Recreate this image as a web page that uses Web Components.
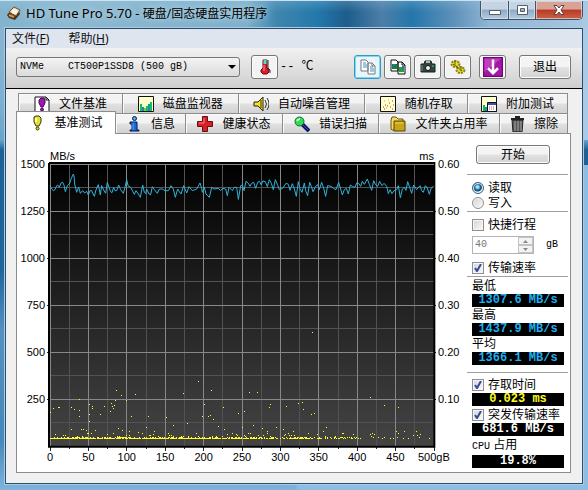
<!DOCTYPE html>
<html lang="zh-CN">
<head>
<meta charset="utf-8">
<title>HD Tune Pro 5.70</title>
<style>
html, body { margin: 0; height: 100%; }
body { font: 12px/16px "Liberation Sans", "Noto Sans CJK SC", sans-serif; color: #000; --mono: "Liberation Mono", "Noto Sans CJK SC", monospace; }
</style>
</head>
<body>
<hd-window>
  <hd-titlebar slot="title">HD Tune Pro 5.70 - </hd-titlebar>
  <hd-menubar></hd-menubar>
  <hd-toolbar></hd-toolbar>
  <hd-workspace></hd-workspace>
</hd-window>

<script>
const define = (name, markup, setup) => {
  const template = document.createElement('template');
  template.innerHTML = markup;
  customElements.define(name, class extends HTMLElement {
    constructor() {
      super();
      this.attachShadow({ mode: 'open' }).append(template.content.cloneNode(true));
    }
    connectedCallback() { if (setup) setup(this.shadowRoot, this); }
  });
};

const icons = {
  disk: '<path d="M1 9 6 3 13 5 14 8 9 14 3 12Z" fill="#443322"/><path d="M3 6 8 1 14 4 10 10Z" fill="#e9d6b8" stroke="#6e5130"/><ellipse cx="8.5" cy="5.5" rx="3" ry="2.5" fill="#fff4dc"/><path d="M3 9l5 2" stroke="#e0953c" stroke-width="2"/>',
  thermo: '<path d="M6 1h4v8l2 2v2l-2 2H6l-2-2v-2l2-2z" fill="#e0182d" stroke="#700818"/><path d="M6.500 1h3v4h-3z" fill="#4fe0c4"/><path d="M7 6v6" stroke="#ff9aa0"/><path d="M11 1v8l2 2v3" fill="none" stroke="#333"/>',
  copy: '<path d="M1 1h5l2 2v9H1zM8 4h4l3 3v8H8z" fill="#fff" stroke="#777"/><path d="M3 4h3M3 6h4M3 8h4M10 8h3M10 10h4M10 12h4" stroke="#3a91c8"/><path d="M12 4v3h3" fill="none" stroke="#777"/>',
  copyImage: '<path d="M1 1h5l2 2v9H1zM8 3h4l3 3v9H8z" fill="#fff" stroke="#111"/><path d="M2 5h5v5H2z" fill="#16803a"/><path d="M9 8h5v5H9z" fill="#1ca52f"/><path d="M3 5h2v2H3zM12 7h2v3h-2z" fill="#2776c8"/><path d="M12 3v3h3" fill="none" stroke="#111"/>',
  camera: '<path d="M1 5h3l1-3h6l1 3h3v8H1z" fill="#33443e" stroke="#17221e"/><path d="M6 4V2h4v2" fill="#aeb8b4"/><circle cx="8" cy="9" r="2.500" fill="#f1f5f3" stroke="#111"/><path d="M2 6v6" stroke="#7d8a85"/><path d="M12 7h2" stroke="#1eea6c"/>',
  gears: '<ellipse cx="5.500" cy="5" rx="4" ry="3" fill="#e6dc30" stroke="#8c800e" stroke-width="2" stroke-dasharray="2 1"/><ellipse cx="10.500" cy="11" rx="4" ry="3" fill="#e6dc30" stroke="#8c800e" stroke-width="2" stroke-dasharray="2 1"/><path d="M5 1v5M11 7v5M3 5l9 7" stroke="#6d620c"/>',
  down: '<path d="M0 0h16v16H0z" fill="#a316a8"/><path d="M0 0h16L0 13z" fill="#bf3cc3"/><path d="M8 2v11M4 9l4 4 4-4" stroke="#fff" stroke-width="2" fill="none"/><path d="M.5.5h15v15H.5z" fill="none" stroke="#6c0871"/>',
  fileMark: '<path d="M1 1h11l3 3v12H1z" fill="#fff" stroke="#111"/><path d="M12 1v3h3" fill="none" stroke="#111"/><path d="M5 4l2-2h3l1 2v3l-2 4H7L5 7z" fill="#a315b2" stroke="#480650"/><circle cx="8" cy="13.500" r="1.500" fill="#a315b2" stroke="#480650"/>',
  bars: '<path d="M.5.500h15v15H.5z" fill="#ffffc8" stroke="#111"/><path d="M2 8h2v7H2zM8 10h2v5H8zM12 6h2v9h-2z" fill="#16bd62"/><path d="M4 11h2v4H4zM10 8h2v7h-2z" fill="#1691aa"/><path d="M6 12h2v3H6z" fill="#52dd45"/>',
  sound: '<path d="M1 6h4l5-5v14l-5-5H1z" fill="#f1e22b" stroke="#27230a"/><path d="M8 4v8" stroke="#9c8b11" stroke-width="2"/><path d="M12 4q3 4 0 8M14 2q4 6 0 12" fill="none" stroke="#333"/>',
  random: '<path d="M.5.500h15v15H.5z" fill="#ffffd0" stroke="#111"/><path d="M3 11h1M5 9h1M7 10h1M9 7h1M12 5h1M10 11h1M13 9h1M4 13h1M12 13h1" stroke="#c12b12"/><path d="M4 5h1M8 4h1M6 12h1" stroke="#e0a22a"/>',
  extra: '<path d="M.5.500h15v15H.5z" fill="#ffffd0" stroke="#111"/><path d="M2 9h2v6H2z" fill="#12b65b"/><path d="M4 11h2v4H4z" fill="#1691aa"/><path d="M6.500 6.500h9v9h-9z" fill="#fff" stroke="#111"/><path d="M7 7h8v2H7z" fill="#3c4fae"/><path d="M8 11h6M8 13h6" stroke="#c25a97" stroke-dasharray="1 1"/>',
  mark: '<path d="M5 2l2-1h3l2 2v4l-2 4H7L5 7z" fill="#e4e12c" stroke="#34320a"/><path d="M7 3v4" stroke="#ffffb0" stroke-width="2"/><circle cx="8.500" cy="13.500" r="1.500" fill="#e4e12c" stroke="#34320a"/>',
  info: '<path d="M4 6h7v8h2v1H4v-1h2V8H4z" fill="#1769e0" stroke="#07194d"/><path d="M7 7v7" stroke="#55b0ff"/><circle cx="8.500" cy="2.500" r="2" fill="#39b8e8" stroke="#07194d"/>',
  cross: '<path d="M5.500.500h5v5h5v5h-5v5h-5v-5h-5v-5h5z" fill="#d81f26" stroke="#651013"/><path d="M7 2v5H2" fill="none" stroke="#f58385"/>',
  lens: '<path d="M8 8l7 7" stroke="#10145a" stroke-width="4"/><path d="M9 9l5 5" stroke="#3a4bd0" stroke-width="1"/><circle cx="5.500" cy="5.500" r="4.500" fill="#2ddd56" stroke="#126a2a"/><path d="M3 5q1-2 3-2" stroke="#caffcf" fill="none" stroke-width="2"/>',
  folder: '<path d="M1 4l1-3h4l2 2h5v11H2L1 13z" fill="#f2dd62" stroke="#665412"/><path d="M4 5h11v10H4z" fill="#c9a414" stroke="#554409"/><path d="M5 7h8" stroke="#f2d65c"/>',
  trash: '<path d="M3 4h11l-1 12H4z" fill="#555" stroke="#222"/><path d="M2 3h13M6 1h5" stroke="#222" stroke-width="2"/><path d="M6 5v10M9 5v10M12 5v10" stroke="#aaa"/>'
};

define('hd-icon', `<style>:host{display:block;flex:none;width:16px;height:16px}svg{display:block;width:100%;height:100%}</style><svg viewBox="0 0 16 16" aria-hidden="true"></svg>`,
  (root, host) => { root.querySelector('svg').innerHTML = icons[host.getAttribute('name')] || ''; });

define('hd-window', `
<style>
:host{display:flex;flex-direction:column;box-sizing:border-box;min-height:100vh;padding:0 5px 6px;
 background:linear-gradient(90deg,transparent 50%,#a9cbe8 51%) 0 28px/100% 112px no-repeat,
 linear-gradient(90deg,transparent 50%,#8fbde2 51%) 0 165px/100% 325px no-repeat,
 linear-gradient(180deg,#8fb6cf 0,#7fb0d0 100px,#6aa3c9 140px,#1d6197 150px,#1f669d 270px,#5590c0 330px,#4787b9 440px,#7fb3dd 100%)}
.client{flex:1;display:flex;flex-direction:column;border:1px solid #27516f;border-top-color:#2c4a66;background:#f0f0f0;box-shadow:0 0 0 1px #a8cde8}
</style><slot name="title"></slot><div class="client"><slot></slot></div>`);

define('hd-titlebar', `
<style>
:host{display:flex;align-items:flex-start;height:28px;margin:0 -5px;padding:0 5px 0 6px;border-top:1px solid #cbe2f0;box-sizing:border-box;
 background:linear-gradient(180deg,#9ecbe444,transparent 40%),
 linear-gradient(90deg,#83b3cd 0,#8db9d0 12%,#7fb0cb 42%,#3f86ae 47%,#2378ab 54%,#1d5d8c 59%,#4d7fa8 65%,#2476ac 70%,#5c90b9 77%,#8fb4d4 83%,#a9c8e2 100%)}
hd-icon{margin:5px 4px 0 0}
h1{flex:1;margin:0;font:13px/25px "Noto Sans","Noto Sans CJK SC",sans-serif;white-space:nowrap;text-shadow:0 0 6px #d5e7ef}
h1 span{font-size:12px}
.buttons{display:flex;height:18px;border:1px solid #3f5266;border-top:0;border-radius:0 0 5px 5px;overflow:hidden}
button{display:grid;place-items:center;height:18px;width:28px;padding:0;border:0;border-right:1px solid #3f5266;background:linear-gradient(#c5d3e2 45%,#8ea9c4 50%,#b6cbdf);box-shadow:inset 0 0 0 1px #dbe7f2aa}
button:nth-child(2){width:27px}
button:last-child{width:46px;border:0;background:linear-gradient(#d9a295 45%,#b73a25 50%,#cf6142)}
svg{display:block;width:14px;height:12px}
</style>
<hd-icon name="disk"></hd-icon><h1><slot></slot><span>硬盘/固态硬盘实用程序</span></h1>
<div class="buttons">
<button aria-label="最小化"><svg viewBox="0 0 14 12"><path d="M1.500 6.500h11v4h-11z" fill="#fff" stroke="#53606e"/></svg></button>
<button aria-label="最大化"><svg viewBox="0 0 14 12"><path d="M2.500 1.500h10v9h-10zM5.500 4.500h4v3h-4z" fill="#fff" fill-rule="evenodd" stroke="#53606e"/></svg></button>
<button aria-label="关闭"><svg viewBox="0 0 14 12"><path d="M2 1.500h3l2 2.500 2-2.500h3L9 6l3 4.500H9L7 8l-2 2.500H2L5 6z" fill="#fff" stroke="#5a3d40"/></svg></button>
</div>`);

define('hd-menubar', `
<style>:host{display:flex;gap:19px;height:19px;padding:0 6px;background:#dfe5ef}
button{padding:0;border:0;background:none;color:#111;font:12px/19px "Noto Sans","Noto Sans CJK SC",sans-serif}</style>
<button>文件(<u>F</u>)</button><button>帮助(<u>H</u>)</button>`);

define('hd-button', `
<style>:host{display:block}
button{display:grid;place-items:center;box-sizing:border-box;width:100%;height:100%;padding:0;border:1px solid #777;border-radius:3px;background:linear-gradient(#f4f4f4 48%,#e2e2e2 52%,#d3d3d3);box-shadow:inset 0 0 0 1px #fcfcfc;font:inherit;color:#000}
:host([icon]) button{background:#f3f3f3}
:host([active]) button{border-color:#3199c4;background:#e8f6fc;box-shadow:inset 0 0 0 1px #7fd8f4}</style>
<button><slot></slot></button>`, (root, host) => {
  if (host.hasAttribute('label')) root.querySelector('button').setAttribute('aria-label', host.getAttribute('label'));
});

define('hd-toolbar', `
<style>
:host{display:flex;align-items:center;height:41px;box-sizing:border-box;padding:0 11px 3px 10px;border-bottom:1px solid #000;background:linear-gradient(#f1f1f1,#cfcfcf)}
.combo{display:grid;flex:0 1 224px;margin-right:11px}
select,.combo svg{grid-area:1/1}
select{appearance:none;min-width:0;height:20px;box-sizing:border-box;padding:0 18px 0 3px;border:1px solid #777;border-radius:3px;background:linear-gradient(#f3f3f3,#dcdcdc);color:#000;font:10px/18px var(--mono)}
.combo svg{place-self:center end;margin-right:4px;width:8px;height:4px;pointer-events:none}
hd-button{width:27px;height:24px;flex:none}
output{flex:1;padding-left:2px;font:12px/20px var(--mono);white-space:pre}
.group{display:flex;gap:3px;margin-right:8px}
.big{width:20px;height:20px}
hd-button.exit{width:52px;margin-left:13px}
</style>
<div class="combo"><select aria-label="驱动器"><option>NVMe&nbsp;&nbsp;&nbsp;&nbsp;CT500P1SSD8 (500 gB)</option></select><svg viewBox="0 0 8 4"><path d="M0 0h8L4 4z"/></svg></div>
<hd-button icon label="温度"><hd-icon name="thermo"></hd-icon></hd-button><output>-- ℃</output>
<div class="group">
<hd-button icon active label="复制文本"><hd-icon name="copy"></hd-icon></hd-button>
<hd-button icon label="复制图像"><hd-icon name="copyImage"></hd-icon></hd-button>
<hd-button icon label="截图"><hd-icon name="camera"></hd-icon></hd-button>
<hd-button icon label="选项"><hd-icon name="gears"></hd-icon></hd-button></div>
<hd-button icon label="保存"><hd-icon name="down" class="big"></hd-icon></hd-button>
<hd-button class="exit">退出</hd-button>`);

define('hd-tab', `
<style>:host{display:block;min-width:0}
button{display:flex;align-items:center;justify-content:center;gap:9px;width:100%;height:20px;box-sizing:border-box;padding:0;border:1px solid #8c8c8c;border-width:1px 1px 0 0;background:linear-gradient(#f3f3f3 45%,#e0e0e0 55%,#d2d2d2);box-shadow:inset 1px 1px 0 #fafafa;font:inherit;color:#000;white-space:nowrap}
:host([selected]) button{height:23px;background:#fff;border-left-width:1px;padding-bottom:1px}</style>
<button role="tab"><hd-icon></hd-icon><slot></slot></button>`, (root, host) => {
  root.querySelector('hd-icon').shadowRoot.querySelector('svg').innerHTML = icons[host.getAttribute('icon')];
  root.querySelector('button').setAttribute('aria-selected', host.hasAttribute('selected'));
});

define('hd-tabs', `
<style>:host{display:block}
.row{display:flex;align-items:flex-end;height:20px;margin:0 3px 0 2px}
.back hd-tab:first-child{border-left:1px solid #8c8c8c}
.row.front{margin:0;padding-right:3px;border-bottom:1px solid #8c8c8c}
.front hd-tab[selected]{margin-bottom:-1px}
</style>
<div role="tablist">
<div class="row back">
<hd-tab icon="fileMark" style="flex:104 1 0">文件基准</hd-tab><hd-tab icon="bars" style="flex:116 1 0">磁盘监视器</hd-tab><hd-tab icon="sound" style="flex:127 1 0">自动噪音管理</hd-tab><hd-tab icon="random" style="flex:103 1 0">随机存取</hd-tab><hd-tab icon="extra" style="flex:100 1 0">附加测试</hd-tab>
</div><div class="row front">
<hd-tab selected icon="mark" style="flex:100 1 0">基准测试</hd-tab><hd-tab icon="info" style="flex:70 1 0">信息</hd-tab><hd-tab icon="cross" style="flex:97 1 0">健康状态</hd-tab><hd-tab icon="lens" style="flex:96 1 0">错误扫描</hd-tab><hd-tab icon="folder" style="flex:121 1 0">文件夹占用率</hd-tab><hd-tab icon="trash" style="flex:68 1 0">擦除</hd-tab>
</div></div>`);

const speedFirst = '150,80 155,90 160,95 165,92 170,80 173,78 178,85 183,72 188,70 192,78 196,98 202,80 208,75 214,58 220,45 222,50 224,75 230,100 236,84 241,103 248,95 254,102 260,97 265,108 270,95 275,95 278,102 283,112 287,96 291,85 295,77 301,108 305,80 312,95 317,103 322,70 327,85 332,98 336,101 341,85 345,95 350,95 356,78 362,92 370,103 375,85 380,62 384,80 392,85 398,97 403,106 408,95 415,105 421,115 428,78 433,100 437,104 440,90 447,105 452,107 457,83 463,92 472,103 478,90 487,90 495,95 505,95 513,80 520,90 526,115 533,90 538,98 543,105 551,80 560,102 567,83 577,95 590,90 600,72 605,88 607,100 613,85 618,105 628,115 635,85 642,90 655,88 662,95 668,88 677,90 682,110 687,85 697,95 703,85 710,85 715,120';
const speedSecond = '25,152 32,110 37,108 42,125 48,97 55,103 60,112 65,103 71,100 77,118 83,100 88,97 94,108 98,96 106,98 112,113 118,92 124,103 130,122 136,92 142,106 148,122 158,118 168,103 175,106 180,124 187,104 193,120 199,142 205,98 210,120 216,130 223,102 227,125 233,140 239,100 244,112 249,128 257,112 263,107 268,122 275,100 281,118 287,142 293,110 303,112 310,118 318,122 326,100 332,120 337,138 343,122 349,118 355,135 361,108 367,112 375,115 380,102 386,103 392,112 397,97 403,106 412,90 418,106 425,124 431,95 436,106 443,112 449,97 456,110 462,103 470,112 475,134 480,122 486,134 492,125 500,122 505,110 511,146 517,120 523,115 528,124 533,98 539,115 545,133 551,108 560,122 570,110 575,125 580,130 586,110 591,115 598,136 603,118 611,112';
const accessFirst = '150,310 160,298 175,295 178,295 214,295 223,301 238,271 238,304 238,322 268,284 277,292 277,298 268,314 268,337 301,316 313,292 334,283 331,307 337,292 340,298 346,274 343,289 349,244 364,259 379,274 406,256 394,322 445,322 439,355 499,325 520,349 550,253 562,343 595,217 634,244 613,286 670,295 607,322 625,322 631,319 640,331 655,352 715,313 673,360 214,361 244,361 250,361 259,364 286,363 355,358 340,373 367,364 388,367 415,370 463,367';
const accessSecond = '247,70 58,250 80,250 121,286 118,295 25,313 43,307 169,292 205,283 217,280 220,301 244,316 253,313 421,265 463,289 505,295 37,355 70,349 97,358 139,355 160,361 112,367 190,367 289,355 280,367 337,373 427,373 433,376 499,367 523,367 559,367 505,373 550,378 571,376';
const pairs = text => text.split(' ').map(p => p.split(',').map(Number));

define('hd-chart', `
<style>
:host{flex:1;min-width:0;display:grid;grid-template:14px 1fr 25px/33px 1fr 33px;padding-top:15px;font:11px/14px "Liberation Sans",sans-serif}
.units{grid-area:1/2;display:flex;justify-content:space-between}
.y{display:grid;grid-template-rows:repeat(6,47fr) 2fr;margin:-6px 0 6px}
.left{grid-area:2/1;text-align:right;padding-right:5px}
.right{grid-area:2/3;padding-left:4px}
.x{grid-area:3/2;display:flex;justify-content:space-between;padding-top:3px}
.x span{display:flex;justify-content:center;width:0}
svg{grid-area:2/2;display:block;width:100%;height:100%;min-height:200px;overflow:visible}
.major,.minor,.ticks{stroke-width:1;vector-effect:non-scaling-stroke;shape-rendering:crispEdges;fill:none}
.major{stroke:#888}
.minor{stroke:#525252}
.ticks{stroke:#222}
polyline{fill:none;stroke:#30b3dc;stroke-width:1;vector-effect:non-scaling-stroke}
.dots{fill:#ffff20;shape-rendering:crispEdges}
</style>
<div class="units"><span>MB/s</span><span>ms</span></div>
<div class="y left"></div>
<svg viewBox="0 0 1152 852" preserveAspectRatio="none" role="img" aria-label="传输速率与存取时间">
<defs><linearGradient id="shade" x2="0" y2="1"><stop stop-color="#000"/><stop offset="1" stop-color="#444"/></linearGradient></defs>
<rect width="1152" height="850" fill="url(#shade)"/>
<path class="minor"/><path class="major"/><path class="ticks"/>
<path d="M-3 0V851H1153V0H-3" fill="none" stroke="#000" stroke-width="6"/>
<path class="major" d="M0 4H1152"/>
<polyline class="one" transform="translate(-150 -12)"/><polyline class="two" transform="translate(540 -42)"/><path class="dots"/>
</svg>
<div class="y right"></div><div class="x"></div>`, root => {
  const fill = (selector, labels) => root.querySelector(selector).innerHTML = labels.map(t => '<span>' + t + '</span>').join('');
  fill('.left', ['1500', '1250', '1000', '750', '500', '250']);
  fill('.right', ['0.60', '0.50', '0.40', '0.30', '0.20', '0.10']);
  fill('.x', ['0', '50', '100', '150', '200', '250', '300', '350', '400', '450', '500gB']);
  let major = '', minor = '', ticks = '';
  for (let i = 0; i <= 20; i++) {
    const x = i * 57.6;
    if (i % 2) minor += `M${x} 0V850`; else major += `M${x} 0V850`;
    ticks += `M${x} 850v${i % 2 ? 9 : 15}`;
  }
  for (let i = 1; i < 12; i++) {
    const y = 4 + i * 70.5;
    if (i % 2) minor += `M0 ${y}H1152`; else { major += `M0 ${y}H1152`; ticks += `M-9 ${y}h9M1152 ${y}h6`; }
  }
  root.querySelector('.major').setAttribute('d', major);
  root.querySelector('.minor').setAttribute('d', minor);
  root.querySelector('.ticks').setAttribute('d', ticks);
  root.querySelector('.one').setAttribute('points', speedFirst);
  root.querySelector('.two').setAttribute('points', speedSecond);
  const snap = value => Math.round(value / 3) * 3;
  const dots = [...pairs(accessFirst).map(([x, y]) => [snap(x - 150), snap(y + 438)]), ...pairs(accessSecond).map(([x, y]) => [snap(x + 540), snap(y + 438)])];
  let seed = 7;
  const random = () => (seed = seed * 16807 % 2147483647) / 2147483647;
  for (let x = 0; x < 1140; x += 3) {
    const density = x < 480 ? 0.95 : x < 640 ? 0.85 : x < 780 ? 0.7 : x < 920 ? 0.5 : 0.16;
    if (random() < density) dots.push([x, 825]);
    if (random() < density * 0.55) dots.push([x, 822]);
    if (random() < density * 0.2) dots.push([x, 819 - Math.floor(random() * 4) * 3]);
  }
  root.querySelector('.dots').setAttribute('d', dots.map(([x, y]) => `M${x} ${y}h3v3h-3z`).join(''));
});

define('hd-choice', `
<style>:host{display:block}
label{display:flex;align-items:center;gap:4px;height:16px;white-space:nowrap}
:host([type=radio]) label{height:15px}
input{appearance:none;flex:none;box-sizing:border-box;width:12px;height:12px;margin:0;border:1px solid #8e8f8f;background:linear-gradient(135deg,#d3d3d3,#fafafa);box-shadow:inset 0 0 0 1px #f5f5f5}
input[type=radio]{border-radius:50%}
input[type=radio]:checked{border-color:#315f86;background:radial-gradient(circle at 45% 40%,#a8e4fa 0 1px,#1a6b9e 3px,#134269 4px,#d9e9f2 5px)}
input[type=checkbox]:checked{background:url("data:image/svg+xml,%3Csvg xmlns='http://www.w3.org/2000/svg' viewBox='0 0 10 10'%3E%3Cpath d='M2 5l2 3 4-7' fill='none' stroke='%23384a96' stroke-width='2'/%3E%3C/svg%3E"),linear-gradient(135deg,#cfd6e2,#fafafa)}
</style><label><input><slot></slot></label>`, (root, host) => {
  const input = root.querySelector('input');
  input.type = host.getAttribute('type');
  input.checked = host.hasAttribute('checked');
});

define('hd-readout', `
<style>:host{display:block;margin-right:4px;background:#000;color:var(--tone,#fff)}
output{display:block;text-align:center;font:bold 12px/13px var(--mono);white-space:nowrap}</style><output><slot></slot></output>`);

define('hd-spin', `
<style>:host{display:flex;align-items:center;gap:12px;font:10px/16px var(--mono)}
.box{display:flex;width:62px;height:18px;box-sizing:border-box;border:1px solid #b4b4b4;background:#fff}
input{flex:1;min-width:0;padding:0 2px;border:0;background:none;color:#777;font:inherit}
.arrows{display:grid;grid-template-rows:1fr 1fr;width:15px}
button{display:grid;place-items:center;padding:0;border:1px solid #c4c4c4;background:#f3f3f3}
svg{display:block;width:5px;height:3px;fill:#888}</style>
<span class="box"><input id="size" value="40" disabled><span class="arrows"><button disabled aria-label="增加"><svg viewBox="0 0 5 3"><path d="M0 3h5L2.500 0z"/></svg></button><button disabled aria-label="减少"><svg viewBox="0 0 5 3"><path d="M0 0h5L2.500 3z"/></svg></button></span></span><label for="size">gB</label>`);

define('hd-sidebar', `
<style>
:host{flex:0 0 101px;display:flex;flex-direction:column;padding:11px 2px 4px 0}
hd-button{width:74px;height:19px;margin:0 0 10px 9px}
section{border-top:1px solid #a0a0a0;padding-left:5px}
.modes{padding-top:5px;padding-bottom:1px}
.range{padding-top:5px}
.range hd-spin{margin:3px 0 6px}
.speeds{padding-top:1px;padding-bottom:7px}
.access{padding-top:4px;display:grid;row-gap:1px}
.cyan{--tone:#1fb0f0}.yellow{--tone:#ffff20}
.cpu{line-height:16px}
.cpu span{font:10px/16px var(--mono)}
</style>
<hd-button>开始</hd-button>
<section class="modes"><hd-choice type="radio" checked>读取</hd-choice><hd-choice type="radio">写入</hd-choice></section>
<section class="range"><hd-choice type="checkbox">快捷行程</hd-choice><hd-spin></hd-spin><hd-choice type="checkbox" checked>传输速率</hd-choice></section>
<section class="speeds">
<div>最低</div><hd-readout class="cyan">1307.6 MB/s</hd-readout>
<div>最高</div><hd-readout class="cyan">1437.9 MB/s</hd-readout>
<div>平均</div><hd-readout class="cyan">1366.1 MB/s</hd-readout></section>
<section class="access">
<div><hd-choice type="checkbox" checked>存取时间</hd-choice><hd-readout class="yellow">0.023 ms</hd-readout></div>
<div><hd-choice type="checkbox" checked>突发传输速率</hd-choice><hd-readout>681.6 MB/s</hd-readout></div>
<div><div class="cpu"><span>CPU</span> 占用</div><hd-readout>19.8%</hd-readout></div>
</section>`);

define('hd-workspace', `
<style>:host{flex:1;display:flex;flex-direction:column;padding:4px 11px 10px 10px}
main{flex:1;display:flex;border:1px solid #8c8c8c;border-top:0;background:#fff}</style>
<hd-tabs></hd-tabs><main><hd-chart></hd-chart><hd-sidebar></hd-sidebar></main>`);
</script>
</body>
</html>
